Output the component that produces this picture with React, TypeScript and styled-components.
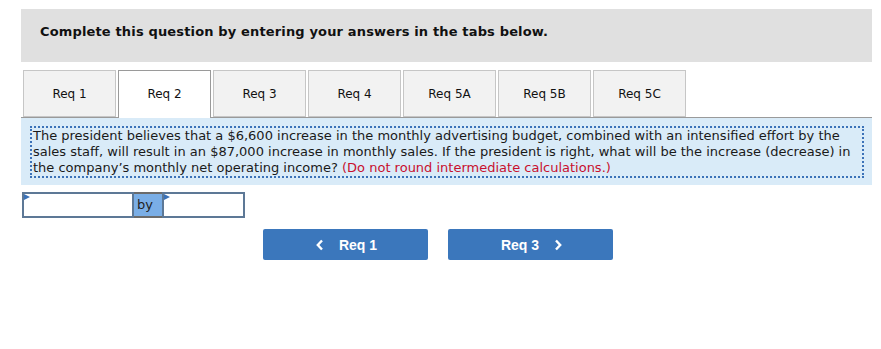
import React from 'react';
import styled, { createGlobalStyle } from 'styled-components';

const GlobalStyle = createGlobalStyle`
  body {
    margin: 0;
    background: #fff;
    font-family: "DejaVu Sans", Verdana, sans-serif;
  }
`;

const tabs = ['Req 1', 'Req 2', 'Req 3', 'Req 4', 'Req 5A', 'Req 5B', 'Req 5C'];
const activeTab = 1;

function Chevron({ dir }: { dir: 'left' | 'right' }) {
  return (
    <svg width="8" height="12" viewBox="0 0 8 12">
      <polyline
        points={dir === 'left' ? '6,1.5 1.8,6 6,10.5' : '2,1.5 6.2,6 2,10.5'}
        fill="none"
        stroke="#fff"
        strokeWidth="2.4"
      />
    </svg>
  );
}

export default function App() {
  return (
    <Page>
      <GlobalStyle />
      <Header>Complete this question by entering your answers in the tabs below.</Header>
      <TabRow>
        {tabs.map((t, i) => (
          <Tab key={t} active={i === activeTab}>
            {t}
          </Tab>
        ))}
      </TabRow>
      <Panel>
        <Question>
          The president believes that a $6,600 increase in the monthly advertising budget, combined with an
          intensified effort by the sales staff, will result in an $87,000 increase in monthly sales. If the
          president is right, what will be the increase (decrease) in the company’s monthly net operating income?{' '}
          <Hint>(Do not round intermediate calculations.)</Hint>
        </Question>
      </Panel>
      <AnswerRow>
        <AnswerInput width={112} />
        <ByLabel>by</ByLabel>
        <AnswerInput width={83} />
      </AnswerRow>
      <NavRow>
        <NavButton>
          <Chevron dir="left" />
          <span>Req 1</span>
        </NavButton>
        <NavButton>
          <span>Req 3</span>
          <Chevron dir="right" />
        </NavButton>
      </NavRow>
    </Page>
  );
}

const Page = styled.div`
  width: 851px;
  padding: 9px 0 0 21px;
`;

const Header = styled.div`
  height: 53px;
  background: #e0e0e0;
  padding: 15px 0 0 19px;
  box-sizing: border-box;
  font-size: 13px;
  font-weight: bold;
  color: #111;
  letter-spacing: 0.15px;
`;

const TabRow = styled.div`
  display: flex;
  align-items: flex-start;
  gap: 2px;
  margin-top: 8px;
  padding-left: 2px;
  height: 47px;
  border-bottom: 1px solid #9a9a9a;
`;

const Tab = styled.div<{ active: boolean }>`
  width: 93px;
  box-sizing: border-box;
  height: ${({ active }) => (active ? 48 : 47)}px;
  border: 1px solid ${({ active }) => (active ? '#9a9a9a' : '#c6c6c6')};
  border-bottom: ${({ active }) => (active ? 'none' : '1px solid #c6c6c6')};
  background: ${({ active }) => (active ? '#fff' : '#f2f2f2')};
  padding-top: 16px;
  line-height: 15px;
  text-align: center;
  font-size: 12px;
  color: #111;
  position: relative;
  z-index: ${({ active }) => (active ? 1 : 0)};
`;

const Panel = styled.div`
  background: #d9ebf8;
  padding: 8px 8px 8px 9px;
  height: 67px;
  box-sizing: border-box;
`;

const Question = styled.div`
  border: 2px dotted #3b72b8;
  padding: 0 0 0 1px;
  font-size: 13px;
  line-height: 16px;
  color: #1a1a1a;
`;

const Hint = styled.span`
  color: #c8102e;
`;

const AnswerRow = styled.div`
  display: flex;
  margin: 7px 0 0 1px;
  height: 26px;
`;

const AnswerInput = styled.div<{ width: number }>`
  width: ${({ width }) => width}px;
  box-sizing: border-box;
  border: 2px solid #5d7896;
  background: #fff;
  position: relative;

  &::before {
    content: '';
    position: absolute;
    top: 0;
    left: 0;
    border-left: 6px solid #3b72b8;
    border-top: 3px solid transparent;
    border-bottom: 3px solid transparent;
  }
`;

const ByLabel = styled.div`
  width: 28px;
  box-sizing: border-box;
  background: #7aaee6;
  border-top: 2px solid #6b6b6b;
  border-bottom: 2px solid #6b6b6b;
  font-size: 13px;
  color: #222;
  padding: 3px 0 0 3px;
`;

const NavRow = styled.div`
  display: flex;
  gap: 20px;
  margin-top: 11px;
  padding-left: 242px;
`;

const NavButton = styled.div`
  width: 165px;
  height: 31px;
  background: #3b77bc;
  border-radius: 2px;
  display: flex;
  align-items: center;
  justify-content: center;
  gap: 15px;
  padding-left: 2px;
  box-sizing: border-box;
  color: #fff;
  font-family: "Liberation Sans", Arial, sans-serif;
  font-weight: bold;
  font-size: 14px;
`;
